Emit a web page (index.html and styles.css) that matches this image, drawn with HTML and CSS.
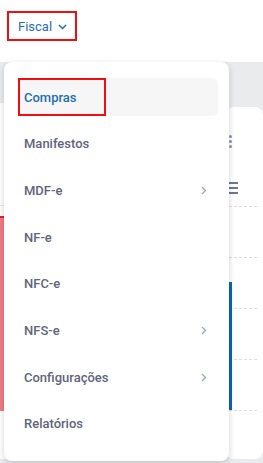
FILE: index.html
```html
<!DOCTYPE html>
<html lang="pt-BR">
<head>
    <meta charset="UTF-8">
    <meta name="viewport" content="width=device-width, initial-scale=1.0">
    <title>Fiscal</title>
    <link rel="stylesheet" href="styles.css">
</head>
<body>
    <!-- topo -->
    <header class="topbar">
        <button class="nav-toggle marked">
            Fiscal
            <svg class="caret" width="9" height="6" viewBox="0 0 9 6"><path d="M1 1l3.5 3.5L8 1" fill="none" stroke="currentColor" stroke-width="1.5"/></svg>
        </button>
    </header>

    <!-- painel atrás do menu -->
    <main class="dashboard">
        <section class="card card-left">
            <div class="area-chart">
                <div class="grid-line"></div>
                <div class="grid-line"></div>
                <div class="grid-line"></div>
                <div class="area-fill"></div>
            </div>
        </section>
        <section class="card card-right">
            <div class="kebab"><i></i><i></i><i></i></div>
            <div class="burger"><i></i><i></i><i></i></div>
            <div class="bars">
                <div class="dash"></div>
                <div class="dash"></div>
                <div class="dash"></div>
                <div class="dash"></div>
                <div class="dash"></div>
                <div class="bar"></div>
            </div>
        </section>
    </main>

    <!-- menu suspenso -->
    <nav class="dropdown">
        <a class="menu-item active"><span class="marked-label">Compras</span></a>
        <a class="menu-item">Manifestos</a>
        <a class="menu-item">MDF-e <svg class="chev" width="6" height="9" viewBox="0 0 6 9"><path d="M1 1l3.5 3.5L1 8" fill="none" stroke="currentColor" stroke-width="1.3"/></svg></a>
        <a class="menu-item">NF-e</a>
        <a class="menu-item">NFC-e</a>
        <a class="menu-item">NFS-e <svg class="chev" width="6" height="9" viewBox="0 0 6 9"><path d="M1 1l3.5 3.5L1 8" fill="none" stroke="currentColor" stroke-width="1.3"/></svg></a>
        <a class="menu-item">Configurações <svg class="chev" width="6" height="9" viewBox="0 0 6 9"><path d="M1 1l3.5 3.5L1 8" fill="none" stroke="currentColor" stroke-width="1.3"/></svg></a>
        <a class="menu-item">Relatórios</a>
    </nav>
</body>
</html>
```
FILE: styles.css
```css
body {
    margin: 0;
    font-family: Roboto, "Liberation Sans", sans-serif;
    background-color: #e9ebec;
    height: 463px;
    overflow: hidden;
    position: relative;
}

.topbar {
    height: 62px;
    background-color: #fff;
    padding: 11px 0 0 7px;
    box-sizing: border-box;
}

.nav-toggle {
    display: flex;
    align-items: center;
    gap: 6px;
    width: 70px;
    height: 30px;
    padding: 0 0 0 9px;
    background: none;
    font-family: inherit;
    font-size: 13px;
    font-weight: 400;
    color: #1f6fb4;
    box-sizing: border-box;
    cursor: pointer;
}

.marked {
    border: 2px solid #f20d12;
}

.caret {
    margin-top: 1px;
}

.dashboard {
    display: flex;
    gap: 4px;
    padding-top: 41px;
}

.card {
    background-color: #fff;
    border-radius: 8px;
    height: 356px;
}

.card-left {
    width: 226px;
    margin-left: -4px;
    border-radius: 0 8px 8px 0;
}

.area-chart {
    position: relative;
    margin-top: 102px;
    height: 206px;
}

.grid-line {
    height: 62px;
    border-top: 1px solid #e4e4e4;
}

.area-fill {
    position: absolute;
    left: 0;
    right: 0;
    top: 11px;
    bottom: 0;
    background-color: #ec7d84;
    border-top: 2px solid #e0202a;
}

.card-right {
    flex: 1;
    margin-top: 4px;
    height: 352px;
    padding-left: 1px;
}

.kebab {
    display: flex;
    flex-direction: column;
    gap: 2px;
    margin: 28px 0 0 2px;
}

.kebab i {
    width: 3px;
    height: 3px;
    border-radius: 50%;
    background-color: #8c93a7;
}

.burger {
    display: flex;
    flex-direction: column;
    gap: 3px;
    margin: 34px 0 0 0;
}

.burger i {
    width: 11px;
    height: 2px;
    background-color: #6f7891;
}

.bars {
    position: relative;
    margin-top: 12px;
}

.dash {
    height: 50px;
    border-top: 1px dashed #dedede;
    margin-left: 2px;
    width: 28px;
}

.bar {
    position: absolute;
    left: -1px;
    top: 76px;
    width: 6px;
    height: 128px;
    background-color: #0b66b1;
}

.dropdown {
    position: absolute;
    top: 62px;
    left: 4px;
    width: 225px;
    height: 399px;
    padding: 16px 11px 0 14px;
    box-sizing: border-box;
    background-color: #fff;
    border-radius: 8px;
    box-shadow: 0 2px 6px rgba(0, 0, 0, 0.18);
    display: flex;
    flex-direction: column;
    gap: 8.7px;
}

.menu-item {
    display: flex;
    align-items: center;
    justify-content: space-between;
    height: 38px;
    padding: 0 11px 0 6px;
    border-radius: 6px;
    font-size: 13px;
    font-weight: 500;
    color: #60657c;
    box-sizing: border-box;
    cursor: pointer;
}

.menu-item.active {
    background-color: #f6f6f7;
    padding-left: 0;
    color: #1f6fb4;
}

.marked-label {
    display: flex;
    align-items: center;
    width: 88px;
    height: 38px;
    padding-left: 4px;
    box-sizing: border-box;
    border: 2px solid #f20d12;
}

.chev {
    color: #a0a5b8;
}
```
